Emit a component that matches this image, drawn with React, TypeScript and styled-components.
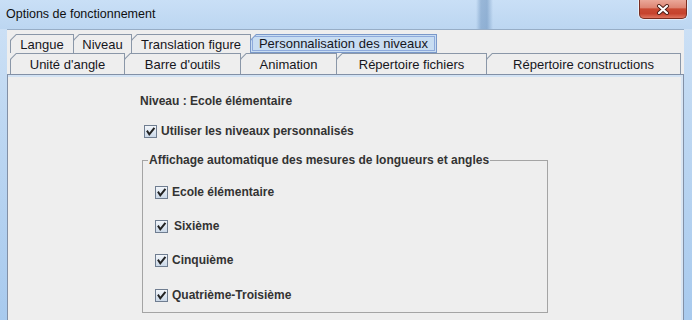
import React from "react";
import styled, { createGlobalStyle } from "styled-components";

const GlobalStyle = createGlobalStyle`
  html, body {
    margin: 0;
    padding: 0;
    background: #bcd6f1;
  }
  body {
    font-family: "Liberation Sans", Arial, sans-serif;
  }
`;

const Window = styled.div`
  width: 692px;
  height: 320px;
  overflow: hidden;
  display: flex;
  flex-direction: column;
  background: linear-gradient(180deg, #cfe2f6 0%, #bfd8f2 35%, #a8caee 100%);
`;

const TitleBar = styled.div`
  height: 29px;
  flex: none;
  display: flex;
  justify-content: space-between;
  align-items: flex-start;
  padding: 0 5px 0 6px;
  background:
    linear-gradient(90deg, transparent 0, transparent 476px, rgba(95, 135, 180, 0.45) 481px, rgba(95, 135, 180, 0.5) 487px, transparent 493px),
    linear-gradient(180deg, #c9dff6 0%, #bcd6f1 100%);
`;

const Caption = styled.span`
  font-size: 12.5px;
  line-height: 29px;
  color: #101010;
`;

const CloseButton = styled.div`
  width: 46px;
  height: 18px;
  border: 1px solid #7b2d20;
  border-top: none;
  border-radius: 0 0 5px 5px;
  background: linear-gradient(180deg, #eaa899 0%, #de8674 42%, #c94a33 50%, #c6432d 75%, #df745e 100%);
  box-shadow: 0 0 0 1px rgba(255, 255, 255, 0.55);
  display: flex;
  align-items: center;
  justify-content: center;
`;

const Frame = styled.div`
  flex: 1;
  display: flex;
  padding: 0 8px 0 7px;
  min-height: 0;
`;

const Client = styled.div`
  flex: 1;
  display: flex;
  flex-direction: column;
  background: #eeeeee;
  border-top: 1px solid #97adc6;
  padding-top: 4px;
`;

const TabRow = styled.div<{ $h: number }>`
  display: flex;
  height: ${({ $h }) => $h}px;
  padding-left: 3px;
  flex: none;
`;

const Tab = styled.div<{ $w: number; $selected?: boolean }>`
  width: ${({ $w }) => $w}px;
  height: 100%;
  flex: none;
  margin-right: -1px;
  box-sizing: border-box;
  padding: ${({ $selected }) => ($selected ? "1px" : "1px 1px 0 1px")};
  background: ${({ $selected }) => ($selected ? "#7a98c9" : "#8a97a8")};
  clip-path: polygon(0 6px, 6px 0, 100% 0, 100% 100%, 0 100%);
`;

const TabFace = styled.div<{ $selected?: boolean }>`
  height: 100%;
  box-sizing: border-box;
  background: ${({ $selected }) => ($selected ? "#c8ddf2" : "#eeeeee")};
  clip-path: polygon(0 5.4px, 5.4px 0, 100% 0, 100% 100%, 0 100%);
  padding: ${({ $selected }) => ($selected ? "1px" : "0")};
`;

const TabLabel = styled.div<{ $selected?: boolean }>`
  height: 100%;
  box-sizing: border-box;
  display: flex;
  align-items: center;
  justify-content: center;
  font-size: 13px;
  color: #16161c;
  border: ${({ $selected }) => ($selected ? "1px solid #8eaadc" : "none")};
  white-space: nowrap;
`;

const Panel = styled.div`
  flex: 1;
  border: 1px solid #8290a6;
  border-bottom: none;
  box-shadow: inset 0 2px 0 #d3e3f4, inset -2px 0 0 #d8e5f3;
  padding: 18px 0 0 132px;
  display: flex;
  flex-direction: column;
  align-items: flex-start;
`;

const Heading = styled.div`
  font-size: 12px;
  font-weight: bold;
  line-height: 16px;
  color: #333333;
`;

const CheckRow = styled.div<{ $top: number; $left: number; $shift?: number }>`
  display: flex;
  align-items: center;
  gap: ${({ $shift }) => 4 + ($shift ?? 0)}px;
  height: 16px;
  margin-top: ${({ $top }) => $top}px;
  padding-left: ${({ $left }) => $left}px;
  font-size: 12px;
  font-weight: bold;
  color: #333333;
  white-space: nowrap;
`;

const Group = styled.fieldset`
  margin: 13px 0 0 2px;
  padding: 0 0 9px 0;
  width: 406px;
  box-sizing: border-box;
  border: 1px solid #a4a4a4;
  display: flex;
  flex-direction: column;
`;

const GroupTitle = styled.legend`
  margin-left: 5px;
  padding: 0 1px;
  font-size: 12px;
  font-weight: bold;
  line-height: 16px;
  color: #333333;
`;

function CheckBox() {
  return (
    <svg width="13" height="13" viewBox="0 0 13 13">
      <defs>
        <linearGradient id="cbg" x1="0" y1="0" x2="0" y2="1">
          <stop offset="0" stopColor="#f4f7fb" />
          <stop offset="1" stopColor="#c9d7e7" />
        </linearGradient>
      </defs>
      <rect x="0.5" y="0.5" width="12" height="12" fill="url(#cbg)" stroke="#6f7d90" />
      <polyline points="3.5,6.5 5.3,9.3 9.8,3.6" fill="none" stroke="#222" strokeWidth="2" strokeLinecap="square" />
    </svg>
  );
}

function CloseGlyph() {
  return (
    <svg width="14" height="11" viewBox="0 0 14 11">
      <path d="M3 2 L11 9 M11 2 L3 9" stroke="#4a1b14" strokeWidth="4" strokeLinecap="round" />
      <path d="M3 2 L11 9 M11 2 L3 9" stroke="#ffffff" strokeWidth="2.2" strokeLinecap="round" />
    </svg>
  );
}

const topTabs = [
  { label: "Langue", w: 64 },
  { label: "Niveau", w: 59 },
  { label: "Translation figure", w: 120 },
  { label: "Personnalisation des niveaux", w: 187, selected: true },
];

const bottomTabs = [
  { label: "Unité d'angle", w: 115 },
  { label: "Barre d'outils", w: 117 },
  { label: "Animation", w: 97 },
  { label: "Répertoire fichiers", w: 151 },
  { label: "Répertoire constructions", w: 195 },
];

const levels = [
  { label: "Ecole élémentaire", top: 16 },
  { label: "Sixième", top: 18, shift: 2 },
  { label: "Cinquième", top: 18 },
  { label: "Quatrième-Troisième", top: 19 },
];

export default function App() {
  return (
    <>
      <GlobalStyle />
      <Window>
        <TitleBar>
          <Caption>Options de fonctionnement</Caption>
          <CloseButton>
            <CloseGlyph />
          </CloseButton>
        </TitleBar>
        <Frame>
          <Client>
            <TabRow $h={19}>
              {topTabs.map((t) => (
                <Tab key={t.label} $w={t.w} $selected={t.selected}>
                  <TabFace $selected={t.selected}>
                    <TabLabel $selected={t.selected}>{t.label}</TabLabel>
                  </TabFace>
                </Tab>
              ))}
            </TabRow>
            <TabRow $h={21}>
              {bottomTabs.map((t) => (
                <Tab key={t.label} $w={t.w}>
                  <TabFace>
                    <TabLabel>{t.label}</TabLabel>
                  </TabFace>
                </Tab>
              ))}
            </TabRow>
            <Panel>
              <Heading>Niveau : Ecole élémentaire</Heading>
              <CheckRow $top={14} $left={4}>
                <CheckBox />
                Utiliser les niveaux personnalisés
              </CheckRow>
              <Group>
                <GroupTitle>Affichage automatique des mesures de longueurs et angles</GroupTitle>
                {levels.map((l) => (
                  <CheckRow key={l.label} $top={l.top} $left={12} $shift={l.shift}>
                    <CheckBox />
                    {l.label}
                  </CheckRow>
                ))}
              </Group>
            </Panel>
          </Client>
        </Frame>
      </Window>
    </>
  );
}
